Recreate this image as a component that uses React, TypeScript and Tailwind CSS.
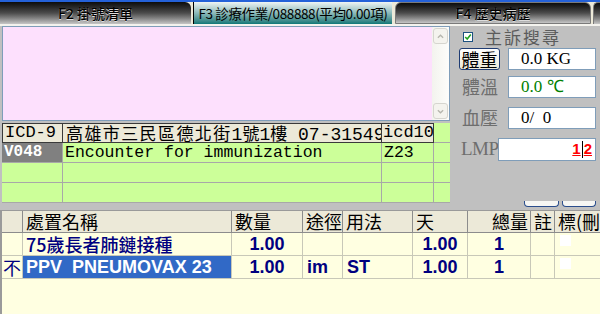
import React from 'react'

const cjk = "font-['Noto_Sans_CJK_TC','Noto_Sans_CJK_SC',sans-serif]"
const mono = "font-['Liberation_Mono','Noto_Sans_CJK_TC',monospace]"

const icdRows = [
  { code: 'V048', name: 'Encounter for immunization', icd10: 'Z23' },
  { code: '', name: '', icd10: '' },
  { code: '', name: '', icd10: '' },
]

const orders = [
  { flag: '', name: '75歲長者肺鏈接種', qty: '1.00', route: '', usage: '', days: '1.00', total: '1', selected: false },
  { flag: '不', name: 'PPV  PNEUMOVAX 23', qty: '1.00', route: 'im', usage: 'ST', days: '1.00', total: '1', selected: true },
]

const Scrollbar = () => (
  <div className="w-[17px] flex flex-col justify-between bg-linear-to-r from-[#f3f3ee] to-[#fdfdfb] py-[1px] px-[1px]">
    <div className="h-[16px] rounded-[3px] border border-[#d6d5cf] bg-[#f4f3ee] flex items-center justify-center">
      <svg viewBox="0 0 8 5" className="w-[7px] h-[5px]">
        <path d="M1 4 L4 1 L7 4" fill="none" stroke="#b5b5ad" strokeWidth="1.5" />
      </svg>
    </div>
    <div className="h-[16px] rounded-[3px] border border-[#d6d5cf] bg-[#f4f3ee] flex items-center justify-center">
      <svg viewBox="0 0 8 5" className="w-[7px] h-[5px]">
        <path d="M1 1 L4 4 L7 1" fill="none" stroke="#b5b5ad" strokeWidth="1.5" />
      </svg>
    </div>
  </div>
)

const IcdTable = () => (
  <div className="mt-[2px] w-[448px] grid grid-cols-[61px_319px_52px_16px] auto-rows-[20px] bg-[#ccff99]">
    {/* header */}
    <div className={`bg-[#ece9d8] border border-[#3a3a3a] text-[17px] leading-[18px] pl-[2px] text-black ${mono}`}>ICD-9</div>
    <div className={`bg-[#ece9d8] border-y border-r border-[#3a3a3a] text-[18px] leading-[18px] pl-[3px] text-black whitespace-pre overflow-hidden ${mono}`}>
      <span className={`${cjk} text-[17px] tracking-[1.4px]`}>高雄市三民區德北街</span>1<span className={`${cjk} text-[17px]`}>號</span>1<span className={`${cjk} text-[17px]`}>樓</span> 07-31549
    </div>
    <div className={`bg-[#ece9d8] border-y border-r border-[#3a3a3a] text-[17px] leading-[18px] pl-[1px] text-black overflow-hidden ${mono}`}>icd10</div>
    <div className="border-b border-[#a8a8a8]" />
    {icdRows.map((r, i) => (
      <React.Fragment key={i}>
        <div className={`border-r border-b border-[#a8a8a8] text-[16px] leading-[19px] pl-[2px] ${r.code ? 'bg-[#808080] text-white font-bold' : ''} ${mono}`}>{r.code}</div>
        <div className={`border-r border-b border-[#a8a8a8] text-[16.5px] leading-[19px] pl-[2px] text-black whitespace-nowrap ${mono}`}>{r.name}</div>
        <div className={`border-r border-b border-[#a8a8a8] text-[16.5px] leading-[19px] pl-[2px] text-black ${mono}`}>{r.icd10}</div>
        <div className="border-b border-[#a8a8a8]" />
      </React.Fragment>
    ))}
  </div>
)

const VitalBox = ({ children, className = '' }: { children: React.ReactNode; className?: string }) => (
  <div className={`h-[22px] bg-white border border-[#7f9db9] flex items-center ${className}`}>{children}</div>
)

const RightPanel = () => (
  <div className="flex-1 flex flex-col relative">
    <div className="h-[18px] mt-[2px] flex items-center pl-[13px] gap-[12px]">
      <div className="w-[10px] h-[10px] bg-white border border-[#1c5180] flex items-center justify-center">
        <svg viewBox="0 0 10 10" className="w-[8px] h-[8px]">
          <path d="M1.5 5 L4 7.5 L8.5 2" fill="none" stroke="#21a121" strokeWidth="2" />
        </svg>
      </div>
      <span className={`text-[17px] tracking-[2px] text-[#5c5c5c] ${cjk}`}>主訴搜尋</span>
    </div>
    <div className="mt-[2px] flex items-center">
      <div className={`ml-[9px] w-[41px] h-[22px] rounded-[3px] border border-[#1f3c73] bg-linear-to-b from-white to-[#ece9d8] flex items-center justify-center text-[18px] text-black ${cjk}`}>
        體重
      </div>
      <VitalBox className="ml-[8px] w-[88px] pl-[12px]">
        <span className="font-['Liberation_Serif',serif] text-[17px] text-black">0.0 KG</span>
      </VitalBox>
    </div>
    <div className="mt-[3px] flex items-center">
      <span className={`ml-[12px] w-[46px] text-[18px] text-[#6e6e6e] ${cjk}`}>體溫</span>
      <VitalBox className="w-[88px] pl-[12px]">
        <span className="font-['Liberation_Serif',serif] text-[17px] text-[#008000]">0.0 ℃</span>
      </VitalBox>
    </div>
    <div className="mt-[4px] flex items-center">
      <span className={`ml-[12px] w-[46px] text-[18px] text-[#6e6e6e] ${cjk}`}>血壓</span>
      <VitalBox className="w-[88px] pl-[12px]">
        <span className="font-['Liberation_Serif',serif] text-[17px] text-black whitespace-pre">0/  0</span>
      </VitalBox>
    </div>
    <div className="mt-[4px] flex items-center">
      <span className="ml-[11px] w-[37px] font-['Liberation_Serif',serif] text-[19px] text-[#6e6e6e] tracking-[-0.5px]">LMP</span>
      <VitalBox className="w-[98px] h-[23px] justify-end pr-[3px]">
        <span className="font-['Liberation_Sans',sans-serif] text-[15px] font-bold text-[#ff0000] underline">1</span>
        <span className="w-px h-[17px] bg-black mx-[1px]" />
        <span className="font-['Liberation_Sans',sans-serif] text-[15px] font-bold text-[#ff0000] underline">2</span>
      </VitalBox>
    </div>
    <div className="mt-auto mb-[3px] flex gap-[3px] pl-[74px]">
      <div className="w-[35px] h-[6px] bg-[#f6f6f3] border-x border-b border-[#2a4d8c] rounded-b-[4px]" />
      <div className="w-[34px] h-[6px] bg-[#f6f6f3] border-x border-b border-[#2a4d8c] rounded-b-[4px]" />
    </div>
  </div>
)

const headerCell = `h-[22px] bg-[#ece9d8] border-r border-b border-[#8c8c8c] text-[18px] leading-[21px] text-black pl-[3px] whitespace-nowrap overflow-hidden ${cjk}`
const dataCell = 'h-[23px] border-r border-b border-[#c8c8b8] text-[18px] leading-[22px] font-bold text-[#000080] whitespace-pre overflow-hidden'

const OrderTable = () => (
  <div className="flex-1 bg-[#ffffe1] border-l-2 border-t border-[#9a9a9a]">
    <div className="grid grid-cols-[21px_209px_71px_40px_70px_55px_63px_24px_50px]">
      <div className={headerCell} />
      <div className={headerCell}>處置名稱</div>
      <div className={headerCell}>數量</div>
      <div className={headerCell}>途徑</div>
      <div className={headerCell}>用法</div>
      <div className={headerCell}>天</div>
      <div className={`${headerCell} text-right pr-[2px]`}>總量</div>
      <div className={headerCell}>註</div>
      <div className={headerCell}>標(刪</div>
      {orders.map((o, i) => (
        <React.Fragment key={i}>
          <div className={`${dataCell} font-normal pl-[1px] ${cjk}`}>{o.flag}</div>
          <div className={`${dataCell} pl-[3px] ${o.selected ? 'bg-[#3169c6] text-white' : `font-medium ${cjk}`}`}>{o.name}</div>
          <div className={`${dataCell} text-center`}>{o.qty}</div>
          <div className={`${dataCell} pl-[4px]`}>{o.route}</div>
          <div className={`${dataCell} pl-[4px]`}>{o.usage}</div>
          <div className={`${dataCell} text-center`}>{o.days}</div>
          <div className={`${dataCell} text-center`}>{o.total}</div>
          <div className={dataCell} />
          <div className={`${dataCell} pl-[5px] pt-[2px]`}>
            <div className="w-[11px] h-[11px] bg-white" />
          </div>
        </React.Fragment>
      ))}
    </div>
  </div>
)

export default function App() {
  return (
    <div className="w-[600px] h-[314px] overflow-hidden bg-[#c0c0c0] flex flex-col font-['Liberation_Sans','Noto_Sans_CJK_TC',sans-serif]">
      <div className="h-[2px] bg-[#2461d8]" />
      {/* tabs */}
      <div className={`h-[22px] flex bg-[#ece9d8] text-[14px] ${cjk}`}>
        <div className="w-[191px] rounded-tr-[6px] bg-linear-to-b from-[#0c0c0c] via-[#4c4c4c] to-[#c6c6c6] flex items-center justify-center font-medium text-black [text-shadow:0_1px_0_#ddd]">
          F2 掛號清單
        </div>
        <div className="w-[2px]" />
        <div className="w-[199px] border-l border-black bg-linear-to-b from-[#eef4f4] via-[#8cbaba] to-[#087878] flex items-center justify-center text-black text-[13.5px] tracking-[-0.4px]">
          F3 診療作業/088888(平均0.00項)
        </div>
        <div className="w-[3px]" />
        <div className="w-[196px] rounded-t-[6px] border border-[#7a7a7a] bg-linear-to-b from-[#0c0c0c] via-[#4c4c4c] to-[#c6c6c6] flex items-center justify-center font-medium text-black [text-shadow:0_1px_0_#ddd]">
          F4 歷史病歷
        </div>
        <div className="w-[2px]" />
        <div className="flex-1 rounded-tl-[5px] border-l border-t border-[#7a7a7a] bg-linear-to-b from-[#0c0c0c] via-[#4c4c4c] to-[#c6c6c6]" />
      </div>
      <div className="h-[2px] bg-[#f4f3ee]" />
      {/* middle */}
      <div className="h-[184px] flex overflow-hidden">
        <div className="w-[450px] flex flex-col pl-[2px]">
          <div className="h-[95px] flex bg-[#fde0fd] border border-[#7f9db9]">
            <div className="flex-1" />
            <Scrollbar />
          </div>
          <IcdTable />
        </div>
        <RightPanel />
      </div>
      <OrderTable />
    </div>
  )
}
